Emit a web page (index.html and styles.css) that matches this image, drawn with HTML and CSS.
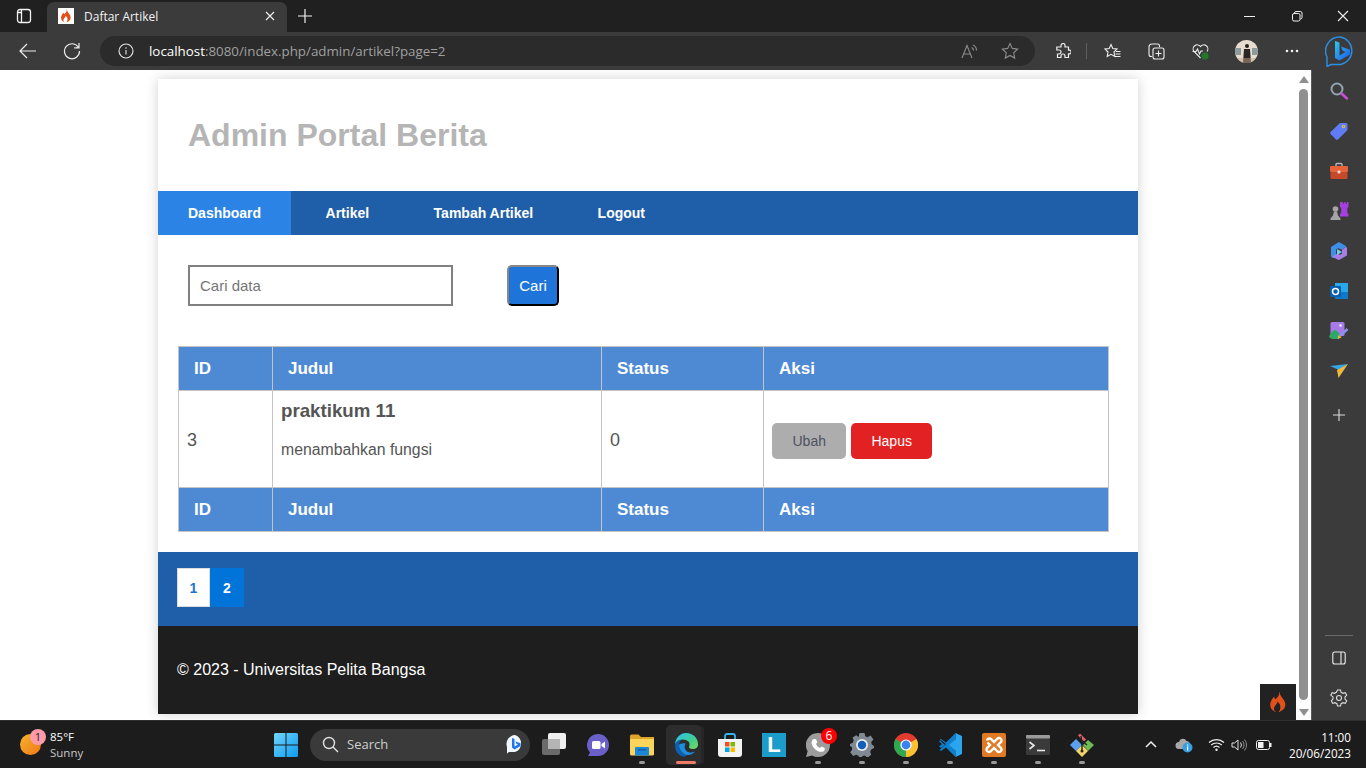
FILE: index.html
```html
<!DOCTYPE html>
<html lang="en">
<head>
    <meta charset="UTF-8">
    <meta name="viewport" content="width=device-width, initial-scale=1.0">
    <title>Daftar Artikel</title>
    <link rel="stylesheet" href="styles.css">
</head>
<body>
    <svg class="defs" width="0" height="0">
        <symbol id="flame" viewBox="0 0 24 24">
            <path fill="#e2511c" d="M13 1c1 4-2 6-4 8-1-1-1-2-1-3-3 3-4.500 6-4.500 9 0 4 3 7 6.500 8-2-1-3-3-2-5.500 1-2 3-3 3.500-6 2 2 3.500 4 3 7 0 2-1 3.500-2 4.500 4-1 7.500-4 7.500-8 0-6-5.500-8-6.500-14z"/>
        </symbol>
    </svg>

    <div class="tabstrip">
        <div class="tab-actions">
            <svg width="16" height="16" viewBox="0 0 16 16" fill="none" stroke="#f2f2f2" stroke-width="1.300"><rect x="1.500" y="1.500" width="13" height="13" rx="2.500"/><path d="M5.500 2v12M2 4.500h3.500"/></svg>
        </div>
        <div class="tab">
            <span class="favicon"><svg width="14" height="14"><use href="#flame"/></svg></span>
            <span class="tab-title">Daftar Artikel</span>
            <svg width="10" height="10" viewBox="0 0 10 10" stroke="#eee" stroke-width="1.200"><path d="M1 1l8 8M9 1l-8 8"/></svg>
        </div>
        <svg class="new-tab" width="16" height="16" viewBox="0 0 16 16" stroke="#f2f2f2" stroke-width="1.200"><path d="M8 1v14M1 8h14"/></svg>
        <div class="window-controls">
            <svg width="46" height="32" viewBox="0 0 46 32" stroke="#eee"><path d="M16 16.500h11"/></svg>
            <svg width="46" height="32" viewBox="0 0 46 32" fill="none" stroke="#eee"><rect x="18.500" y="13.500" width="7.500" height="7.500" rx="1.500"/><path d="M20.500 13.500v-.5a1.500 1.500 0 0 1 1.500-1.500h4.500a1.500 1.500 0 0 1 1.500 1.500v4.500a1.500 1.500 0 0 1-1.500 1.500"/></svg>
            <svg width="46" height="32" viewBox="0 0 46 32" stroke="#eee" stroke-width="1.100"><path d="M18 11l10 10M28 11l-10 10"/></svg>
        </div>
    </div>

    <div class="toolbar">
        <button class="tool">
            <svg width="18" height="18" viewBox="0 0 18 18" fill="none" stroke="#eee" stroke-width="1.200"><path d="M17 9H1M8 2L1 9l7 7"/></svg>
        </button>
        <button class="tool">
            <svg width="18" height="18" viewBox="0 0 18 18" fill="none" stroke="#eee" stroke-width="1.200"><path d="M15.500 5.500A7.500 7.500 0 1 0 16.500 9M16 1v4.800h-4.800"/></svg>
        </button>
        <div class="address">
            <svg width="16" height="16" viewBox="0 0 16 16" fill="none" stroke="#e6e6e6" stroke-width="1.100"><circle cx="8" cy="8" r="7"/><path d="M8 7v4.500M8 4.300v1.400"/></svg>
            <span class="url"><b>localhost</b>:8080/index.php/admin/artikel?page=2</span>
            <svg class="read-aloud" width="17" height="17" viewBox="0 0 17 17" fill="none" stroke="#8c8c8c" stroke-width="1.100"><path d="M1 15L6 2.500 11 15M2.800 11h6.400M10.500 4.500a3 3 0 0 1 2 3M12 2a6 6 0 0 1 3.500 5.500"/></svg>
            <svg class="addr-star" width="18" height="18" viewBox="0 0 18 18" fill="none" stroke="#8c8c8c" stroke-width="1.100"><path d="M9 1.500l2.300 4.900 5.300.7-3.900 3.700 1 5.300L9 13.500l-4.700 2.600 1-5.300-3.900-3.700 5.300-.7z"/></svg>
        </div>
        <div class="tool-group">
            <svg class="t-ext" width="16" height="16" viewBox="0 0 16 16" fill="none" stroke="#eee" stroke-width="1.200"><path d="M6 2.500a2 2 0 0 1 4 0V4h3.500v3.200H15a2 2 0 0 1 0 3.600h-1.500V14.500H10V13a2 2 0 0 0-4 0v1.500H2.500V11H4a2 2 0 0 0 0-4H1.800V4H6z"/></svg>
            <span class="tool-sep"></span>
            <svg class="t-fav" width="17" height="17" viewBox="0 0 17 17" fill="none" stroke="#eee" stroke-width="1.100"><path d="M7 1.500l1.800 4 4.200.5-3 3 .8 4.500-3.800-2.200-3.800 2.200.8-4.500-3-3 4.200-.5zM12 8.500h4.500M11.500 11h5M11 13.500h5.500"/></svg>
            <svg class="t-col" width="17" height="17" viewBox="0 0 17 17" fill="none" stroke="#eee" stroke-width="1.100"><path d="M4 13.500H3a2 2 0 0 1-2-2V4a3 3 0 0 1 3-3h5.500a2 2 0 0 1 2 2v1"/><rect x="5" y="5" width="11" height="11" rx="2"/><path d="M10.500 7.500v6M7.500 10.500h6"/></svg>
            <svg class="t-health" width="17" height="17" viewBox="0 0 17 17" fill="none"><path stroke="#eee" stroke-width="1.100" d="M8.500 15L2 8.500A4 4 0 0 1 8.500 3.500 4 4 0 0 1 15 8.500M.5 8.500h3.500l1.500-2.500 2 5 1.500-3h2"/><circle cx="13" cy="13" r="3.500" fill="#1f7a2c"/></svg>
            <span class="avatar">
                <svg width="23" height="23" viewBox="0 0 23 23"><rect width="23" height="23" fill="#e8dccf"/><rect x="0" y="8" width="6" height="7" fill="#8d9a9e"/><rect x="17" y="8" width="6" height="7" fill="#8d9a9e"/><circle cx="12" cy="6" r="2" fill="#222"/><path d="M9 9h6l1 14H8z" fill="#2a2524"/><rect y="18" width="23" height="5" fill="#c2a58c" opacity=".5"/></svg>
            </span>
            <svg class="t-dots" width="14" height="4" viewBox="0 0 14 4" fill="#eee"><circle cx="2" cy="2" r="1.300"/><circle cx="7" cy="2" r="1.300"/><circle cx="12" cy="2" r="1.300"/></svg>
            <svg class="t-bing" width="31" height="31" viewBox="0 0 31 31" fill="none">
                <defs><linearGradient id="bingfill" x1="0" y1="0" x2="1" y2="1"><stop offset="0" stop-color="#2bc8f0"/><stop offset="1" stop-color="#2058e8"/></linearGradient></defs>
                <path stroke="#2a8fe8" stroke-width="1.400" d="M15.500 1a14 14 0 0 1 0 27.500H6L2 30.500V21A14 14 0 0 1 15.500 1z"/>
                <path fill="url(#bingfill)" d="M10 5l4.500 1.500v13l6-3.500-3-1.400-1.500-4 9 3.200v4.600l-10.500 6L10 22z"/>
            </svg>
        </div>
    </div>

    <div class="viewport">
        <div class="page-area">
            <div class="container">
                <header class="site-header">
                    <h1>Admin Portal Berita</h1>
                </header>
                <nav class="site-nav">
                    <a class="active" href="#">Dashboard</a>
                    <a href="#">Artikel</a>
                    <a href="#">Tambah Artikel</a>
                    <a href="#">Logout</a>
                </nav>
                <section class="content">
                    <form class="search-form">
                        <input type="text" placeholder="Cari data">
                        <button type="button">Cari</button>
                    </form>
                    <table class="data-table">
                        <colgroup>
                            <col class="col-id"><col class="col-title"><col class="col-status"><col>
                        </colgroup>
                        <thead>
                            <tr><th>ID</th><th>Judul</th><th>Status</th><th>Aksi</th></tr>
                        </thead>
                        <tbody>
                            <tr>
                                <td>3</td>
                                <td class="cell-title">
                                    <h3>praktikum 11</h3>
                                    <p>menambahkan fungsi</p>
                                </td>
                                <td>0</td>
                                <td class="cell-actions">
                                    <a class="btn btn-edit" href="#">Ubah</a>
                                    <a class="btn btn-delete" href="#">Hapus</a>
                                </td>
                            </tr>
                        </tbody>
                        <tfoot>
                            <tr><th>ID</th><th>Judul</th><th>Status</th><th>Aksi</th></tr>
                        </tfoot>
                    </table>
                </section>
                <div class="pager-band">
                    <a class="page-link" href="#">1</a>
                    <a class="page-link current" href="#">2</a>
                </div>
                <footer class="site-footer">&copy; 2023 - Universitas Pelita Bangsa</footer>
            </div>
            <div class="ci-toolbar"><svg width="22" height="22"><use href="#flame"/></svg></div>
        </div>

        <div class="scrollbar">
            <span class="arrow-up"></span>
            <span class="thumb"></span>
            <span class="arrow-down"></span>
        </div>

        <aside class="sidebar">
            <div class="side-btn"><svg width="20" height="20" viewBox="0 0 20 20" fill="none"><circle cx="8" cy="8" r="5.500" stroke="#8fa6b0" stroke-width="2"/><path d="M12.500 12.500l5.500 5" stroke="#c94fd8" stroke-width="2.500" stroke-linecap="round"/></svg></div>
            <div class="side-btn"><svg width="20" height="20" viewBox="0 0 20 20"><path fill="#5f7cf5" d="M11 2h6a1.500 1.500 0 0 1 1.500 1.500V9L9 18.500a1.500 1.500 0 0 1-2 0L1.500 13a1.500 1.500 0 0 1 0-2z"/><circle cx="14.500" cy="5.500" r="1.800" fill="#e8c53a"/><circle cx="14.500" cy="5.500" r=".8" fill="#5f7cf5"/></svg></div>
            <div class="side-btn"><svg width="20" height="20" viewBox="0 0 20 20"><path fill="none" stroke="#b5b5b5" stroke-width="1.400" d="M7 5V3.500A1 1 0 0 1 8 2.500h4a1 1 0 0 1 1 1V5"/><rect x="1" y="5" width="18" height="6" rx="1" fill="#e8623a"/><rect x="1.500" y="11" width="17" height="7" rx="1" fill="#c8482a"/><rect x="8.500" y="9.500" width="3" height="3" rx="1" fill="#ddd"/></svg></div>
            <div class="side-btn"><svg width="20" height="20" viewBox="0 0 20 20"><circle cx="6.500" cy="8" r="2.800" fill="#a5a5a5"/><path fill="#a5a5a5" d="M5 10.500h3l1 4 2.500 3v1.500h-10v-1.500l2.500-3z"/><path fill="#a53fe0" d="M12 1h1.800v1.500h1.400V1h1.400v1.500H18V1h1.500v5l-1.200 1v5l1.200 1v2.500H11V13l1.200-1V7L11 6V1z"/></svg></div>
            <div class="side-btn"><svg width="20" height="20" viewBox="0 0 20 20" stroke-linejoin="round"><path fill="#3f8ee8" stroke="#3f8ee8" stroke-width="2" d="M10 2l6 3.500-3.500 2L9.500 6 6 8v7l-2 1a1.500 1.500 0 0 1-1-1.500v-8z"/><path fill="#a77de6" stroke="#a77de6" stroke-width="2" d="M17 7v7l-7 4-5-2.500 3.500-2L11 15l3-2V9z"/><path fill="#6fd0f2" d="M8 8l5 3-5 3z"/></svg></div>
            <div class="side-btn"><svg width="20" height="20" viewBox="0 0 20 20"><rect x="6" y="2" width="13" height="9" fill="#28a8ea"/><path fill="#0f78c8" d="M6 11h13v7H7a1 1 0 0 1-1-1z"/><rect x="1" y="5" width="11" height="11" rx="1" fill="#0a5eb0"/><circle cx="6.500" cy="10.500" r="3" fill="none" stroke="#fff" stroke-width="1.500"/></svg></div>
            <div class="side-btn"><svg width="20" height="20" viewBox="0 0 20 20"><rect x="1.500" y="1" width="14" height="14" rx="1.500" fill="#a67be8"/><circle cx="11.500" cy="4.500" r="1.300" fill="#eee"/><path fill="#2ea866" d="M0 16c2-5 5-8 8-6s3 5 2 8H3z"/><path stroke="#8f8ff0" stroke-width="2.500" d="M11 15l7.500-7"/><path fill="#f2b83a" d="M8.500 18l1-4 3 2.500z"/></svg></div>
            <div class="side-btn"><svg width="20" height="20" viewBox="0 0 20 20"><path fill="#35a5e8" d="M1 5l18-2-9 6z"/><path fill="#f2b83a" d="M19 3L8 9l1.500 8z"/><path fill="#2a7fd0" d="M19 3L9.500 17 12 13z"/></svg></div>
            <div class="side-btn side-plus"><svg width="14" height="14" viewBox="0 0 14 14" stroke="#ddd" stroke-width="1.100"><path d="M7 1v12M1 7h12"/></svg></div>
            <div class="side-bottom">
                <span class="side-divider"></span>
                <div class="side-btn"><svg width="14" height="14" viewBox="0 0 14 14" fill="none" stroke="#eee" stroke-width="1.100"><rect x=".8" y="1" width="12.400" height="12" rx="2"/><path d="M9 1v12"/></svg></div>
                <div class="side-btn"><svg width="18" height="18" viewBox="0 0 18 18" fill="none" stroke="#ddd" stroke-width="1.100"><path d="M7.500 1h3l.6 2.300 1.900 1 2.300-.7 1.400 2.600-1.700 1.700v2.200l1.700 1.700-1.400 2.600-2.300-.7-1.900 1-.6 2.300h-3l-.6-2.300-1.900-1-2.300.7-1.400-2.600 1.700-1.700V7.900L.8 6.200l1.400-2.600 2.300.7 1.900-1z"/><circle cx="9" cy="9" r="2.500"/></svg></div>
            </div>
        </aside>
    </div>

    <div class="taskbar">
        <div class="weather">
            <span class="sun"></span>
            <span class="weather-badge">1</span>
            <div class="weather-text">
                <div class="temp">85°F</div>
                <div class="cond">Sunny</div>
            </div>
        </div>
        <svg class="start" width="24" height="24" viewBox="0 0 24 24"><defs><linearGradient id="win" x1="0" y1="0" x2="1" y2="1"><stop offset="0" stop-color="#6fd6fb"/><stop offset="1" stop-color="#0e9af0"/></linearGradient></defs><path fill="url(#win)" d="M0 1.500A1.500 1.500 0 0 1 1.500 0h10v11.500H0zM12.500 0h10A1.500 1.500 0 0 1 24 1.500v10H12.500zM0 12.500h11.500V24h-10A1.500 1.500 0 0 1 0 22.500zM12.500 12.500H24v10a1.500 1.500 0 0 1-1.500 1.500h-10z"/></svg>
        <div class="task-search">
            <svg width="17" height="17" viewBox="0 0 17 17" fill="none" stroke="#e0e0e0" stroke-width="1.400"><circle cx="7" cy="7" r="5.500"/><path d="M11 11l5 5"/></svg>
            <span>Search</span>
            <svg class="search-bing" width="20" height="20" viewBox="0 0 20 20"><path fill="#f2f6ff" d="M10 1a9 9 0 0 1 0 17H4l-2 1.500V13A9 9 0 0 1 10 1z"/><path fill="#1f78e8" d="M7 4l2.500 1v7.500l3.500-2-1.700-.8-.8-2.300 5 1.800v2.800l-6 3.500L7 13.500z"/></svg>
        </div>
        <div class="apps">
            <div class="app"><svg width="24" height="24" viewBox="0 0 24 24"><rect x="6" y="0" width="18" height="16" rx="2" fill="#f0f0f0"/><rect x="0" y="6" width="18" height="16" rx="2" fill="#6b6b6b"/><rect x="6" y="6" width="12" height="10" fill="#b5b5b5"/></svg></div>
            <div class="app"><svg width="24" height="24" viewBox="0 0 24 24"><path fill="#6a60c8" d="M12 1a11 11 0 0 1 0 22H2l2-3.500A11 11 0 0 1 12 1z"/><rect x="6" y="8" width="8.500" height="8" rx="1.500" fill="#fff"/><path fill="#fff" d="M15.500 11l3.500-2.500v7L15.500 13z"/></svg></div>
            <div class="app running"><svg width="24" height="24" viewBox="0 0 24 24"><path fill="#dfa52a" d="M0 3a1.500 1.500 0 0 1 1.500-1.500h7L11 4h13v4H0z"/><path fill="#fbd55b" d="M0 6h24v15a1.500 1.500 0 0 1-1.500 1.500h-21A1.500 1.500 0 0 1 0 21z"/><rect x="5" y="14" width="14" height="8.500" rx="1" fill="#1b87d8"/><rect x="8" y="16" width="8" height="1.500" fill="#0f5fa8"/></svg></div>
            <div class="app active"><svg width="24" height="24" viewBox="0 0 24 24"><defs><linearGradient id="edgetop" x1="0" y1="0" x2="1" y2="1"><stop offset="0" stop-color="#35c1f1"/><stop offset=".6" stop-color="#3fcf8e"/><stop offset="1" stop-color="#7cdc55"/></linearGradient></defs><path fill="#0f5fb0" d="M1 12C1 5 6 0 12 0c7 0 12 5 12 11.500 0 3-2.500 4.500-5 4.500s-4-1-4-2c0-1 1.500-1.500 1.500-3.500 0-3-3-5-5.500-5S5 8 5 12c0 5 4 9 8 10-1 1-2 2-3.500 1.500C4 22.500 1 18 1 12z"/><path fill="url(#edgetop)" d="M1 11C2 4 7 0 12 0c7 0 12 5 12 11.500 0 3-2.500 4.500-5 4.500s-4-1-4-2c1-2 1-5-2-6.500C9 5.500 3 6 1 11z"/><path fill="#1b8ee0" d="M5 12c0 5 4 9 8 10 3 .5 6-1 8-3.500-3 1.500-7 1.500-9-1-2-2-1.500-5-.5-7-3-.5-6 .5-6.500 1.500z"/></svg></div>
            <div class="app"><svg width="24" height="24" viewBox="0 0 24 24"><path fill="none" stroke="#35b5ee" stroke-width="1.800" d="M7 7V3a2 2 0 0 1 2-2h6a2 2 0 0 1 2 2v4"/><path fill="#f3f3f3" d="M0 6h24v15a3 3 0 0 1-3 3H3a3 3 0 0 1-3-3z"/><rect x="7" y="9" width="4.500" height="4.500" fill="#f25022"/><rect x="12.500" y="9" width="4.500" height="4.500" fill="#7fba00"/><rect x="7" y="14.500" width="4.500" height="4.500" fill="#00a4ef"/><rect x="12.500" y="14.500" width="4.500" height="4.500" fill="#ffb900"/></svg></div>
            <div class="app"><span class="logo-l">L</span></div>
            <div class="app running"><svg width="24" height="24" viewBox="0 0 24 24"><path fill="#9c9c9c" d="M12 0a12 12 0 0 1 0 24 12 12 0 0 1-6-1.600L0 24l1.600-5.800A12 12 0 0 1 12 0z"/><path fill="#fff" d="M8 6l2 .2 1.300 3-1.300 1.700c1 2 2 3 4 4l1.700-1.300 3 1.300v2c-1 2-4 2.500-7 1-3-1.500-5-4-6-7C5 8 6.500 6.500 8 6z"/></svg><span class="app-badge">6</span></div>
            <div class="app running"><svg width="24" height="24" viewBox="0 0 24 24"><path fill="#7f8a93" d="M9.500 0h5l.8 3.200 2.300 1 2.900-1.600 3 3.900-2.300 2.400.5 2.600 2.300 1.500v2l-2.800 1.500-1 2.300 1 3-3.800 3-2.500-2.200-2.400.4-1 2.500H9.500l-1-2.800-2.300-1-3 1.300-3-3.800 2-2.600-.4-2.500L0 13v-2l2.800-1.200.9-2.300L2.500 4.500l3.800-2.300 2.300 1.800z"/><circle cx="12" cy="12" r="6" fill="#e8ecef"/><circle cx="12" cy="12" r="4.200" fill="#1460b8"/></svg></div>
            <div class="app running"><svg width="24" height="24" viewBox="0 0 24 24"><circle cx="12" cy="12" r="12" fill="#e33b2e"/><path fill="#f9c22e" d="M12 12l10.400-6A12 12 0 0 1 12 24z"/><path fill="#2da94f" d="M12 12l0 12A12 12 0 0 1 1.600 6z"/><circle cx="12" cy="12" r="5.600" fill="#fff"/><circle cx="12" cy="12" r="4.400" fill="#3b82f0"/></svg></div>
            <div class="app running"><svg width="24" height="24" viewBox="0 0 24 24"><path fill="#0e7fcc" d="M1 8.500l2-1.500 5 4-5 4-2-1.500 3-2.500zM17.500 0L8 9.500 3 6 1.500 7 7 12l-5.500 5L3 18l5-3.500 9.500 9.500z"/><path fill="#2aa5ee" d="M17.500 0L24 3v18l-6.500 3zM17.500 6.500L11 12l6.500 5.500z" fill-rule="evenodd"/></svg></div>
            <div class="app running"><svg width="24" height="24" viewBox="0 0 24 24" fill="none"><rect width="24" height="24" rx="2" fill="#e07a24"/><path stroke="#fff" stroke-width="2.400" d="M5 7.500a2.500 2.500 0 0 1 4-1.500l3 3 3-3a2.500 2.500 0 1 1 3.500 3.500L16 12l2.500 2.500A2.500 2.500 0 1 1 15 18l-3-3-3 3a2.500 2.500 0 1 1-3.500-3.500L8 12 5.500 9.500"/></svg></div>
            <div class="app running"><svg width="24" height="20" viewBox="0 0 24 20" fill="none"><rect width="24" height="20" rx="1.500" fill="#3a3a3a"/><rect width="24" height="3.500" rx="1" fill="#9a9a9a"/><path stroke="#e8e8e8" stroke-width="1.600" d="M3.500 7l4.500 3.500L3.500 14"/><path stroke="#e8e8e8" stroke-width="1.600" d="M11 15.500h8"/></svg></div>
            <div class="app running"><svg width="24" height="24" viewBox="0 0 24 24"><path fill="#5aa0ee" d="M0 12l6-6 6 6-6 6z"/><path fill="#e0606a" d="M8 2.500L10 .5l6 6-2 2z"/><path fill="#6ebb54" d="M13 12l5-5 6 5-6 6z"/><path fill="#f2d46a" d="M6 18l6-6 6 6-6 6z"/><path stroke="#222" stroke-width="1.400" fill="none" d="M11 3l1 9v6M12 8l5 4"/><circle cx="12" cy="18" r="1.500" fill="#222"/></svg></div>
        </div>
        <div class="tray">
            <div class="tray-item tray-chevron"><svg width="12" height="7" viewBox="0 0 12 7" fill="none" stroke="#eee" stroke-width="1.500"><path d="M1 6l5-5 5 5"/></svg></div>
            <div class="tray-item tray-cloud"><svg width="18" height="16" viewBox="0 0 18 16"><path fill="#a8a8a8" d="M4 12a3.500 3.500 0 0 1 0-7 4 4 0 0 1 7.500-1A3 3 0 0 1 14 9v3z"/><circle cx="12.500" cy="10.500" r="5" fill="#3a9fe0"/><rect x="12" y="9.500" width="1.200" height="4" fill="#fff"/><rect x="12" y="7.500" width="1.200" height="1.200" fill="#fff"/></svg></div>
            <div class="tray-item tray-wifi"><svg width="17" height="13" viewBox="0 0 17 13" fill="none" stroke="#f0f0f0" stroke-width="1.200"><path d="M1 4.500a11 11 0 0 1 15 0M3.200 7a8 8 0 0 1 10.600 0M5.500 9.500a4.500 4.500 0 0 1 6 0"/><circle cx="8.500" cy="11.700" r=".6" fill="#f0f0f0"/></svg></div>
            <div class="tray-item tray-sound"><svg width="16" height="14" viewBox="0 0 16 14" fill="none" stroke="#e0e0e0" stroke-width="1"><path d="M1 5v4h2.500L7 12V2L3.500 5zM9.500 4.500a4 4 0 0 1 0 5"/><path stroke="#8a8a8a" d="M11.500 3a6.500 6.500 0 0 1 0 8M13.500 1.500a9 9 0 0 1 0 11"/></svg></div>
            <div class="tray-item tray-battery"><svg width="16" height="10" viewBox="0 0 16 10"><rect x=".5" y=".5" width="13" height="9" rx="2" fill="none" stroke="#f0f0f0"/><rect x="2" y="2" width="5.500" height="6" fill="#f0f0f0"/><rect x="14" y="3" width="1.500" height="4" fill="#f0f0f0"/></svg></div>
            <div class="clock">
                <div>11:00</div>
                <div>20/06/2023</div>
            </div>
        </div>
    </div>
</body>
</html>
```

FILE: styles.css
```css
* {
    box-sizing: border-box;
}

html, body {
    margin: 0;
    height: 100%;
}

body {
    width: 1366px;
    height: 768px;
    overflow: hidden;
    display: flex;
    flex-direction: column;
    font-family: "Liberation Sans", Arial, sans-serif;
    background-color: #fff;
}

.defs {
    position: absolute;
}

svg {
    display: block;
    flex-shrink: 0;
}

/* browser tabs */
.tabstrip {
    height: 32px;
    background-color: #202020;
    display: flex;
    align-items: flex-end;
    font-family: "Open Sans", "Noto Sans", sans-serif;
}

.tab-actions {
    width: 47px;
    height: 32px;
    display: flex;
    align-items: center;
    justify-content: center;
}

.tab {
    width: 240px;
    height: 30px;
    background-color: #3b3b3b;
    border-radius: 7px 7px 0 0;
    display: flex;
    align-items: center;
    padding: 0 12px 2px 11px;
    color: #f2f2f2;
    font-size: 12px;
}

.favicon {
    width: 16px;
    height: 16px;
    background-color: #fff;
    display: flex;
    align-items: center;
    justify-content: center;
}

.tab-title {
    flex: 1;
    margin-left: 10px;
}

.new-tab {
    margin: 0 0 8px 10px;
}

.window-controls {
    margin-left: auto;
    display: flex;
    align-self: flex-start;
}

/* address bar row */
.toolbar {
    height: 38px;
    background-color: #3b3b3b;
    display: flex;
    align-items: center;
    padding-left: 6px;
}

.tool {
    width: 44px;
    height: 30px;
    background: none;
    border: none;
    padding: 0;
    display: flex;
    align-items: center;
    justify-content: center;
}

.address {
    width: 935px;
    height: 30px;
    margin-left: 6px;
    border-radius: 15px;
    background-color: #2b2b2b;
    display: flex;
    align-items: center;
    padding-left: 18px;
    font-family: "Open Sans", "Noto Sans", sans-serif;
    font-size: 13.35px;
    color: #a0a0a0;
}

.url {
    margin-left: 15px;
    flex: 1;
}

.url b {
    font-weight: 400;
    color: #fff;
}

.read-aloud {
    margin-right: 23px;
}

.addr-star {
    margin-right: 16px;
}

.tool-group {
    flex: 1;
    display: flex;
    align-items: center;
    padding-left: 20px;
}

.tool-sep {
    width: 1px;
    height: 16px;
    background-color: #5e5e5e;
    margin: 0 17px 0 15px;
}

.t-col {
    margin-left: 27px;
}

.t-health {
    margin-left: 27px;
}

.avatar {
    width: 23px;
    height: 23px;
    border-radius: 50%;
    overflow: hidden;
    margin-left: 26px;
}

.t-dots {
    margin-left: 27px;
}

.t-bing {
    margin-left: 26px;
}

/* page + scrollbar + sidebar */
.viewport {
    height: 650px;
    display: flex;
}

.page-area {
    width: 1296px;
    position: relative;
    overflow: hidden;
    padding-top: 9px;
    background-color: #fff;
}

.container {
    width: 980px;
    margin: 0 auto;
    background-color: #fff;
    box-shadow: 0 0 12px rgba(0,0,0,0.18);
}

.site-header {
    padding: 30px;
}

.site-header h1 {
    margin: 0;
    font-size: 32px;
    line-height: 52px;
    color: #b5b5b5;
}

.site-nav {
    height: 44px;
    background-color: #1f5fa9;
    display: flex;
    gap: 4.45px;
}

.site-nav a {
    padding: 0 30px;
    line-height: 44px;
    font-size: 14px;
    font-weight: bold;
    color: #fff;
    text-decoration: none;
}

.site-nav a.active {
    background-color: #2b83e6;
}

.content {
    padding: 30px 29px 20px 20px;
}

.search-form {
    display: flex;
    margin: 0 0 40px 10px;
}

.search-form input {
    width: 265px;
    height: 41px;
    border: 2px solid #808080;
    padding: 0 10px;
    font-family: inherit;
    font-size: 15px;
    outline: none;
}

.search-form input::placeholder {
    color: #757575;
}

.search-form button {
    width: 52px;
    height: 41px;
    margin-left: 54px;
    background-color: #1e74d8;
    border: 2px outset #333;
    border-radius: 5px;
    color: #fff;
    font-family: inherit;
    font-size: 15px;
    padding: 0;
}

.data-table {
    width: 931px;
    border-collapse: collapse;
    table-layout: fixed;
    color: #555;
    font-size: 18px;
}

.col-id {
    width: 94px;
}

.col-title {
    width: 329px;
}

.col-status {
    width: 162px;
}

.data-table th, .data-table td {
    border: 1px solid #c4c4c4;
}

.data-table th {
    height: 44px;
    padding: 0 15px;
    text-align: left;
    background-color: #4e8ad4;
    color: #fff;
    font-size: 17px;
}

.data-table td {
    height: 97px;
    padding: 2px 8px 0;
}

.data-table td.cell-title {
    padding-top: 9px;
    vertical-align: top;
}

.cell-title h3 {
    margin: 0;
    font-size: 18.72px;
    line-height: 21px;
}

.cell-title p {
    margin: 20px 0 0;
    font-size: 15.8px;
    line-height: 18px;
}

.data-table td.cell-actions {
    padding-top: 3px;
    font-size: 0;
}

.btn {
    display: inline-block;
    height: 36px;
    line-height: 36px;
    padding: 0 20.5px;
    border-radius: 5px;
    font-size: 14px;
    text-decoration: none;
}

.btn-edit {
    background-color: #adadad;
    color: #4a5160;
    margin-right: 5px;
}

.btn-delete {
    background-color: #e22222;
    color: #fff;
    padding: 0 20px;
}

.pager-band {
    height: 74px;
    background-color: #1f5fa9;
    display: flex;
    padding: 16px 19px;
}

.page-link {
    width: 33px;
    height: 39px;
    line-height: 38px;
    text-align: center;
    font-size: 14px;
    font-weight: bold;
    text-decoration: none;
    background-color: #fff;
    border: 1px solid #ddd;
    color: #1e74d8;
}

.page-link.current {
    width: 34px;
    background-color: #0074d9;
    border-color: #0074d9;
    color: #fff;
}

.site-footer {
    height: 88px;
    padding: 0 19px;
    line-height: 87px;
    background-color: #1e1e1e;
    color: #fff;
    font-size: 16px;
}

.ci-toolbar {
    position: absolute;
    right: 0;
    bottom: 0;
    width: 36px;
    height: 36px;
    background-color: #222;
    display: flex;
    align-items: center;
    justify-content: center;
}

.scrollbar {
    width: 15px;
    background-color: #fff;
    position: relative;
}

.thumb {
    position: absolute;
    left: 3px;
    top: 19px;
    width: 9px;
    height: 611px;
    border-radius: 5px;
    background-color: #8f8f8f;
}

.arrow-up, .arrow-down {
    position: absolute;
    left: 3px;
    width: 0;
    height: 0;
    border-left: 5px solid transparent;
    border-right: 5px solid transparent;
}

.arrow-up {
    top: 6px;
    border-bottom: 7px solid #8f8f8f;
}

.arrow-down {
    bottom: 4px;
    border-top: 7px solid #8f8f8f;
}

.sidebar {
    flex: 1;
    background-color: #3b3b3b;
    border-left: 1px solid #5a5a5a;
    display: flex;
    flex-direction: column;
    align-items: center;
    padding-top: 1px;
}

.side-btn {
    width: 100%;
    height: 40px;
    display: flex;
    align-items: center;
    justify-content: center;
}

.side-plus {
    margin-top: 4px;
}

.side-bottom {
    margin-top: auto;
    width: 100%;
    display: flex;
    flex-direction: column;
    align-items: center;
    padding-bottom: 2px;
}

.side-divider {
    width: 28px;
    height: 1px;
    background-color: #6a6a6a;
    margin-bottom: 2px;
}

/* windows taskbar */
.taskbar {
    height: 48px;
    background-color: #1c1c1c;
    border-top: 1px solid #2e2e2e;
    display: flex;
    align-items: center;
    padding: 0 15px 0 20px;
    font-family: "Open Sans", "Noto Sans", sans-serif;
    color: #fff;
    position: relative;
}

.weather {
    width: 254px;
    height: 46px;
    display: flex;
    align-items: center;
    position: relative;
}

.sun {
    width: 21px;
    height: 21px;
    border-radius: 50%;
    background: linear-gradient(135deg, #f5b52a, #f0761a);
}

.weather-badge {
    position: absolute;
    left: 10px;
    top: 7px;
    width: 16px;
    height: 16px;
    border-radius: 50%;
    background-color: #ff9aa8;
    color: #222;
    font-size: 11px;
    line-height: 16px;
    text-align: center;
}

.weather-text {
    margin-left: 9px;
    font-size: 11.5px;
    line-height: 16px;
}

.cond {
    color: #c8c8c8;
}

.task-search {
    width: 220px;
    height: 32px;
    margin-left: 12px;
    border-radius: 16px;
    background-color: #3a3a3a;
    display: flex;
    align-items: center;
    padding: 0 5px 1px 12px;
    font-size: 13px;
    color: #cfcfcf;
}

.task-search span {
    margin-left: 8px;
    flex: 1;
}

.apps {
    display: flex;
    margin-left: 2px;
}

.app {
    width: 44px;
    height: 46px;
    display: flex;
    align-items: center;
    justify-content: center;
    position: relative;
}

.app.running::after, .app.active::after {
    content: "";
    position: absolute;
    left: 19px;
    bottom: 4px;
    width: 6px;
    height: 3px;
    border-radius: 2px;
    background-color: #9a9a9a;
}

.app.active::before {
    content: "";
    position: absolute;
    left: 2px;
    top: 3px;
    width: 35px;
    height: 40px;
    border-radius: 5px;
    background-color: #2d2d2d;
    box-shadow: 4px 0 0 -1px #262626;
}

.app.active svg {
    position: relative;
}

.app.active::after {
    left: 12px;
    width: 20px;
    background-color: #f07a6a;
}

.logo-l {
    width: 24px;
    height: 24px;
    background-color: #1b9ccb;
    color: #fff;
    font-family: "Liberation Sans", sans-serif;
    font-weight: bold;
    font-size: 22px;
    line-height: 24px;
    text-align: center;
}

.app-badge {
    position: absolute;
    left: 25px;
    top: 6px;
    width: 16px;
    height: 16px;
    border-radius: 50%;
    background-color: #f00;
    color: #fff;
    font-size: 12px;
    line-height: 16px;
    text-align: center;
}

.tray {
    margin-left: auto;
    display: flex;
    align-items: center;
}

.tray-item {
    display: flex;
    justify-content: center;
}

.tray-chevron {
    width: 22px;
}

.tray-cloud {
    width: 44px;
}

.tray-wifi {
    width: 20px;
}

.tray-sound {
    width: 26px;
}

.tray-battery {
    width: 24px;
}

.clock {
    width: 75px;
    text-align: right;
    font-size: 11.7px;
    line-height: 16px;
}
```
